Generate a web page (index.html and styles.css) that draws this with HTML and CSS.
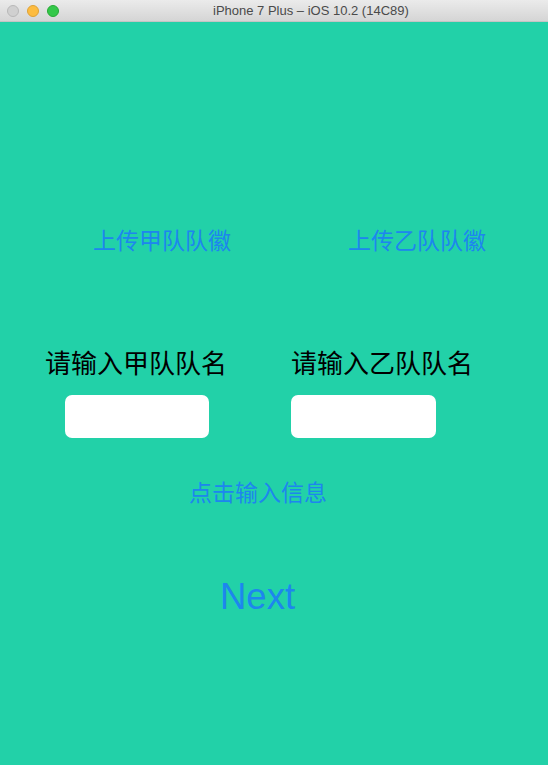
FILE: index.html
```html
<!DOCTYPE html>
<html>
<head>
<meta charset="utf-8">
<link rel="stylesheet" href="styles.css">
</head>
<body>
<div class="titlebar">
  <div class="lights">
    <span class="light gray"></span>
    <span class="light yellow"></span>
    <span class="light green"></span>
  </div>
  <div class="title">iPhone 7 Plus – iOS 10.2 (14C89)</div>
</div>
<main class="screen">
  <div class="row uploads">
    <span class="link">上传甲队队徽</span>
    <span class="link">上传乙队队徽</span>
  </div>
  <div class="row labels">
    <span class="label">请输入甲队队名</span>
    <span class="label">请输入乙队队名</span>
  </div>
  <div class="row inputs">
    <input class="field" type="text">
    <input class="field wide" type="text">
  </div>
  <div class="row info">
    <span class="link">点击输入信息</span>
  </div>
  <div class="row next">
    <span class="next-btn">Next</span>
  </div>
</main>
</body>
</html>
```
FILE: styles.css
```css
html, body {
  margin: 0;
  padding: 0;
  width: 548px;
  height: 765px;
  overflow: hidden;
  background: #22d1a8;
}
.titlebar {
  height: 21px;
  border-bottom: 1px solid #c4c4c4;
  background: linear-gradient(#ebebeb, #d5d5d5);
  display: flex;
  align-items: center;
  position: relative;
}
.lights {
  display: flex;
  gap: 8px;
  padding-left: 7px;
}
.light {
  width: 12px;
  height: 12px;
  border-radius: 50%;
  box-sizing: border-box;
}
.light.gray { background: #d0d0d0; border: 1px solid #b8b8b8; }
.light.yellow { background: #fdbc40; border: 1px solid #dea236; }
.light.green { background: #34c84a; border: 1px solid #27aa35; }
.title {
  margin-left: 154px;
  font-family: "Liberation Sans", "DejaVu Sans", sans-serif;
  font-size: 13px;
  color: #4a4a4a;
}
.screen {
  display: flex;
  flex-direction: column;
  font-family: "Noto Sans CJK SC", "Noto Sans", sans-serif;
}
.row { display: flex; }
.uploads {
  margin-top: 202px;
  padding-left: 93px;
  gap: 117px;
  line-height: 30px;
}
.link {
  color: #1d86ee;
  font-size: 23px;
}
.labels {
  margin-top: 91px;
  padding-left: 45px;
  gap: 64px;
  line-height: 34px;
}
.label {
  color: #000;
  font-size: 26px;
}
.inputs {
  margin-top: 16px;
  padding-left: 65px;
  gap: 82px;
}
.field {
  width: 144px;
  height: 43px;
  box-sizing: border-box;
  border: none;
  border-radius: 7px;
  background: #fff;
  margin: 0;
  padding: 0;
}
.field.wide { width: 145px; }
.info {
  margin-top: 38px;
  padding-left: 189px;
  line-height: 30px;
}
.next {
  margin-top: 69px;
  padding-left: 220px;
  line-height: 44px;
}
.next-btn {
  font-family: "Liberation Sans", Arial, sans-serif;
  font-size: 36.5px;
  color: #1d86ee;
}
```
